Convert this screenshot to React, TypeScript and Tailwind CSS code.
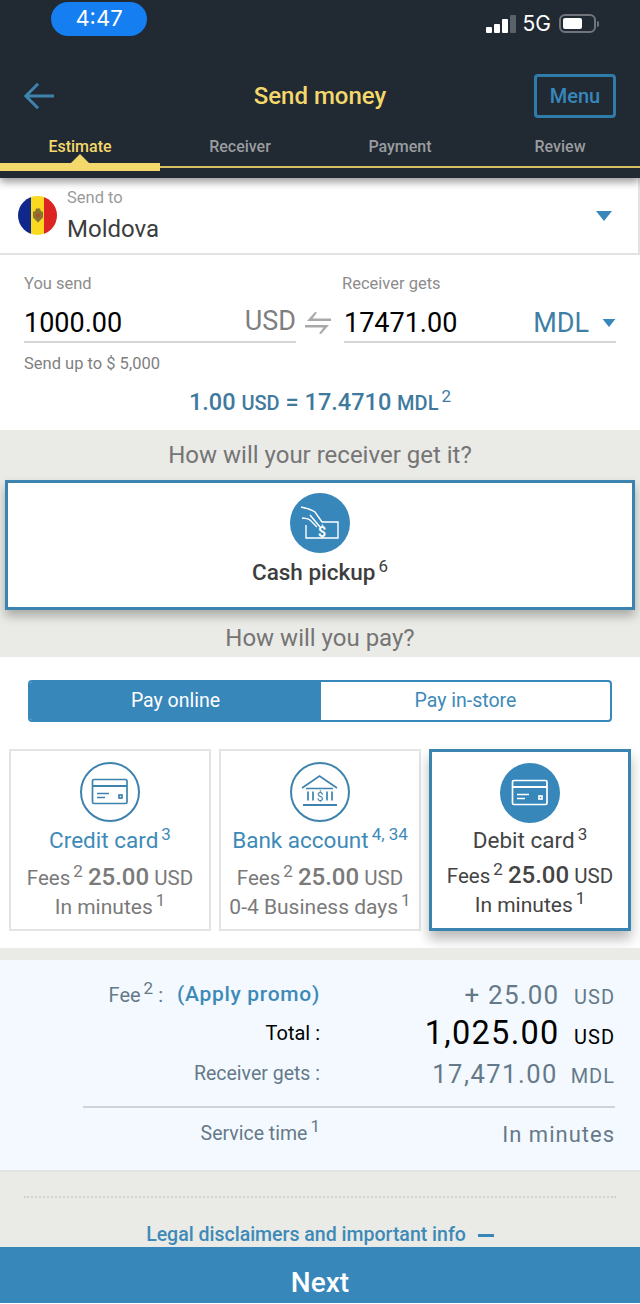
import React from "react";

function Sup({ children }: { children: React.ReactNode }) {
  return <span className="relative -top-[8px] ml-[3px] text-[17px] font-normal leading-none">{children}</span>;
}

function Caret({ className }: { className: string }) {
  return (
    <svg viewBox="0 0 16 10" className={className}>
      <path d="M0 0h16L8 10z" fill="#3787bb" />
    </svg>
  );
}

function CardIcon({ color }: { color: string }) {
  return (
    <svg viewBox="0 0 60 60" className="h-[60px] w-[60px]" fill="none" stroke={color} strokeWidth="1.7">
      <rect x="12.500" y="17.500" width="34.500" height="24" rx="1.500" />
      <path d="M12.500 24h34.500" strokeWidth="2" />
      <path d="M17 31.500h12M17 35.500h8" />
      <rect x="39" y="33" width="3" height="3" />
    </svg>
  );
}

function BankIcon() {
  return (
    <svg viewBox="0 0 60 60" className="h-[60px] w-[60px]" fill="none" stroke="#3d83ad" strokeWidth="1.7">
      <path d="M12 26 29.500 14 47 26M16 26.500h27" />
      <path d="M18 29.500v9M23 29.500v9M37 29.500v9M42 29.500v9" />
      <path d="M13 43h34" strokeWidth="2.200" />
      <text x="30" y="38.500" fontSize="12" fontFamily="Roboto, sans-serif" fill="#3d83ad" stroke="none" textAnchor="middle">$</text>
    </svg>
  );
}

function CashIcon() {
  return (
    <svg viewBox="0 0 60 60" className="h-[60px] w-[60px]" fill="none" stroke="#fff" strokeWidth="1.400">
      <path d="M11 14c6 1.500 11 2.500 14 5l7 10h16v16H16V32" />
      <path d="M12 25c3 .5 6 0 8 2l7 7" />
      <path d="M20 22l10 12" />
      <text x="32" y="43.500" fontSize="14" fontWeight="700" fontFamily="Roboto, sans-serif" fill="#fff" stroke="none" textAnchor="middle">$</text>
    </svg>
  );
}

function PayCard({
  icon,
  title,
  sup,
  time,
  selected,
}: {
  icon: React.ReactNode;
  title: string;
  sup: string;
  time: string;
  selected?: boolean;
}) {
  return (
    <div
      className={
        selected
          ? "flex h-[182px] w-[202px] flex-col items-center border-[3px] border-[#3c84b0] bg-white pt-[11px] text-[#444] shadow-[0_8px_12px_rgba(0,0,0,0.28)]"
          : "flex h-[182px] w-[202px] flex-col items-center border-2 border-[#e4e4e4] bg-white pt-[11px] text-[#7a7a7a]"
      }
    >
      {icon}
      <div className={selected ? "-mt-[2px] h-[38px] text-[22.500px] leading-[38px] text-[#444]" : "-mt-[1px] h-[38px] text-[22.500px] leading-[38px] text-[#3d8ab8]"}>
        {title}
        <Sup>{sup}</Sup>
      </div>
      <div className={selected ? "-mt-[1px] h-[34px] whitespace-nowrap text-[20.500px] leading-[34px]" : "mt-[1px] h-[34px] whitespace-nowrap text-[20.500px] leading-[34px]"}>
        Fees<Sup>2</Sup> <span className="text-[24px] font-medium">25.00</span> USD
      </div>
      <div className="h-[26px] whitespace-nowrap text-[21px] leading-[26px]">
        {time}
        <Sup>1</Sup>
      </div>
    </div>
  );
}

export default function App() {
  return (
    <div className="flex h-[1304px] w-[640px] flex-col overflow-hidden bg-white font-['Roboto',sans-serif]">
      {/* dark header */}
      <header className="relative z-10 h-[178px] bg-[#212933] shadow-[0_4px_8px_rgba(0,0,0,0.4)]">
        <div className="flex h-[36px] items-center pl-[51px] pr-[41px] pt-[1px]">
          <div className="flex h-[34px] w-[96px] items-center justify-center rounded-full bg-[#157ef0] font-['Inter',sans-serif] text-[22px] text-white">
            4:47
          </div>
          <div className="ml-auto mt-[10px] flex items-center">
            <div className="flex items-end gap-[2px]">
              <div className="h-[6px] w-[6px] rounded-[1px] bg-white" />
              <div className="h-[9px] w-[6px] rounded-[1px] bg-white" />
              <div className="h-[14px] w-[6px] rounded-[1px] bg-white" />
              <div className="h-[18px] w-[6px] rounded-[1px] bg-[#5b6168]" />
            </div>
            <span className="ml-[7px] font-['Inter',sans-serif] text-[21px] text-white">5G</span>
            <div className="ml-[8px] flex h-[19px] w-[37px] items-center rounded-[6px] border-2 border-[#71757b] p-[2px]">
              <div className="h-full w-[19px] rounded-[2px] bg-white" />
            </div>
            <div className="ml-[1px] h-[6px] w-[2px] rounded-r bg-[#71757b]" />
          </div>
        </div>
        <div className="mt-[38px] flex h-[44px] items-center pl-[24px] pr-[24px]">
          <div className="w-[82px]">
            <svg viewBox="0 0 32 30" className="h-[30px] w-[30px]" fill="none" stroke="#3d83ad" strokeWidth="3.200">
              <path d="M15 2 2 15l13 13M2 15h30" />
            </svg>
          </div>
          <div className="flex-1 text-center text-[24px] font-medium text-[#f4d86c]">Send money</div>
          <div className="flex h-[44px] w-[82px] items-center justify-center rounded-[4px] border-[3px] border-[#2f7cab] text-[20px] font-medium text-[#3787bb]">
            Menu
          </div>
        </div>
        <div className="mt-[15px] grid h-[28px] grid-cols-4 text-center text-[16px] font-medium leading-[28px] text-[#9a9c9f]">
          <div className="text-[#f4d86c]">Estimate</div>
          <div>Receiver</div>
          <div>Payment</div>
          <div>Review</div>
        </div>
        <div className="relative mt-[2px] flex h-[8px] items-center">
          <div className="h-[8px] w-[160px] bg-[#f4d86c]" />
          <div className="h-[2px] flex-1 bg-[#d8bf62]" />
          <div className="absolute -top-[9px] left-[71px] h-0 w-0 border-x-[9px] border-b-[9px] border-x-transparent border-b-[#f4d86c]" />
        </div>
      </header>

      {/* destination country */}
      <section className="flex h-[77px] items-center border-b-2 border-r-2 border-[#e2e2e2] pl-[18px] pr-[26px]">
        <div className="relative flex h-[39px] w-[39px] overflow-hidden rounded-full">
          <div className="flex-1 bg-[#10288c]" />
          <div className="flex-1 bg-[#fbd921]" />
          <div className="flex-1 bg-[#dc2522]" />
          <svg viewBox="0 0 10 14" className="absolute left-[15px] top-[12px] h-[15px] w-[10px]">
            <path d="M0 3h2l1-3h4l1 3h2v6L5 14 0 9z" fill="#8a7432" />
            <path d="M3 5h4v4H3z" fill="#a8542c" />
          </svg>
        </div>
        <div className="ml-[10px] flex flex-col">
          <span className="text-[16.500px] leading-[20px] text-[#9a9a9a]">Send to</span>
          <span className="mt-[7px] text-[24px] leading-[28px] text-[#3d3d3d]">Moldova</span>
        </div>
        <Caret className="ml-auto h-[10px] w-[16px]" />
      </section>

      {/* amounts */}
      <section className="h-[175px] px-[24px] pt-[19px]">
        <div className="flex text-[16.500px] leading-[20px] text-[#8c8c8c]">
          <span className="w-[318px]">You send</span>
          <span>Receiver gets</span>
        </div>
        <div className="mt-[8px] flex items-center">
          <div className="flex h-[41px] w-[272px] items-center justify-between border-b-2 border-[#d5d5d5] pt-[3px] text-[27px]">
            <span className="text-black">1000.00</span>
            <span className="-mt-[3px] text-[#7f7f7f]">USD</span>
          </div>
          <svg viewBox="0 0 26 24" className="ml-[9px] mr-[13px] h-[24px] w-[26px]" fill="#a9a9a9">
            <path d="M10 1 2 10h24v-2.500H7.500l4.500-6zM16 23l8-9H0v2.500h18.500l-4.500 6z" />
          </svg>
          <div className="flex h-[41px] w-[272px] items-center border-b-2 border-[#d5d5d5] pt-[3px] text-[27px]">
            <span className="text-black">17471.00</span>
            <span className="ml-auto text-[#3f7fa6]">MDL</span>
            <Caret className="ml-[13px] h-[8px] w-[14px]" />
          </div>
        </div>
        <div className="mt-[11px] text-[16.500px] leading-[20px] text-[#7f7f7f]">Send up to $ 5,000</div>
        <div className="mt-[13px] text-center text-[23.500px] font-medium leading-[30px] text-[#3f7a9e]">
          1.00 <span className="text-[20px]">USD</span> = 17.4710 <span className="text-[20px]">MDL</span>
          <Sup>2</Sup>
        </div>
      </section>

      {/* delivery method */}
      <section className="h-[227px] bg-[#eaeae6] pt-[10px]">
        <h2 className="text-center text-[24px] font-normal leading-[30px] text-[#757575]">How will your receiver get it?</h2>
        <div className="mx-[5px] mt-[10px] flex h-[130px] flex-col items-center border-[3px] border-[#3c84b0] bg-white pt-[10px] shadow-[0_6px_10px_rgba(0,0,0,0.28)]">
          <div className="rounded-full bg-[#3787bb]">
            <CashIcon />
          </div>
          <div className="mt-[2px] text-[22.500px] font-medium leading-[34px] text-[#3d3d3d]">
            Cash pickup<Sup>6</Sup>
          </div>
        </div>
        <h2 className="mt-[13px] text-center text-[24px] font-normal leading-[30px] text-[#757575]">How will you pay?</h2>
      </section>

      {/* payment method */}
      <section className="h-[291px] pt-[23px]">
        <div className="mx-[28px] flex h-[42px] overflow-hidden rounded-[4px] border-2 border-[#3787bb] text-[19.500px]">
          <div className="flex w-[291px] items-center justify-center bg-[#3787bb] text-white">Pay online</div>
          <div className="flex flex-1 items-center justify-center text-[#3d8ab8]">Pay in-store</div>
        </div>
        <div className="mx-[9px] mt-[27px] flex gap-[8px]">
          <PayCard
            icon={<div className="rounded-full border-2 border-[#3d83ad]"><div className="-m-[2px]"><CardIcon color="#3d83ad" /></div></div>}
            title="Credit card"
            sup="3"
            time="In minutes"
          />
          <PayCard
            icon={<div className="rounded-full border-2 border-[#3d83ad]"><div className="-m-[2px]"><BankIcon /></div></div>}
            title="Bank account"
            sup="4, 34"
            time="0-4 Business days"
          />
          <PayCard
            icon={<div className="rounded-full bg-[#3787bb]"><CardIcon color="#fff" /></div>}
            title="Debit card"
            sup="3"
            time="In minutes"
            selected
          />
        </div>
      </section>

      <div className="h-[12px] bg-[#eaeae6]" />

      {/* summary */}
      <section className="h-[212px] border-b-2 border-[#e2e2e2] bg-[#f3f9fe] pr-[25px] pt-[16px]">
        <div className="flex h-[38px] items-center">
          <div className="flex w-[320px] items-center justify-end text-[#66798a]">
            <span className="text-[20px]">Fee<Sup>2</Sup> :</span>
            <span className="ml-[14px] text-[21px] font-medium tracking-[0.7px] text-[#3d8ab8]">(Apply promo)</span>
          </div>
          <div className="ml-auto text-[26px] tracking-[1.200px] text-[#66798a]">
            + 25.00 <span className="ml-[7px] text-[20px] tracking-[1px]">USD</span>
          </div>
        </div>
        <div className="flex h-[38px] items-center">
          <div className="w-[320px] text-right text-[20px] text-black">Total :</div>
          <div className="ml-auto text-[32.500px] font-normal tracking-[1.300px] text-black">
            1,025.00 <span className="ml-[5px] text-[20px] tracking-[1px]">USD</span>
          </div>
        </div>
        <div className="mt-[2px] flex h-[40px] items-center">
          <div className="w-[320px] text-right text-[19.500px] text-[#66798a]">Receiver gets :</div>
          <div className="ml-auto text-[25.500px] tracking-[1.500px] text-[#66798a]">
            17,471.00 <span className="ml-[5px] text-[20px] tracking-[1px]">MDL</span>
          </div>
        </div>
        <div className="ml-[83px] mt-[12px] h-[2px] bg-[#cfd2d6]" />
        <div className="mt-[7px] flex h-[38px] items-center">
          <div className="w-[320px] text-right text-[19.500px] text-[#66798a]">
            Service time<Sup>1</Sup>
          </div>
          <div className="ml-auto text-[22px] tracking-[1px] text-[#66798a]">In minutes</div>
        </div>
      </section>

      {/* legal */}
      <section className="h-[75px] bg-[#eaeae6] px-[24px] pt-[24px]">
        <div className="border-t-2 border-dotted border-[#d2d2d2]" />
        <div className="mt-[23px] flex items-center justify-center gap-[12px] text-[19.500px] font-medium leading-[28px] text-[#3d8ab8]">
          <span>Legal disclaimers and important info</span>
          <div className="h-[3px] w-[16px] bg-[#3787bb]" />
        </div>
      </section>

      <button className="h-[56px] bg-[#3787bb] pt-[15px] text-[28px] font-medium text-white">Next</button>
    </div>
  );
}
